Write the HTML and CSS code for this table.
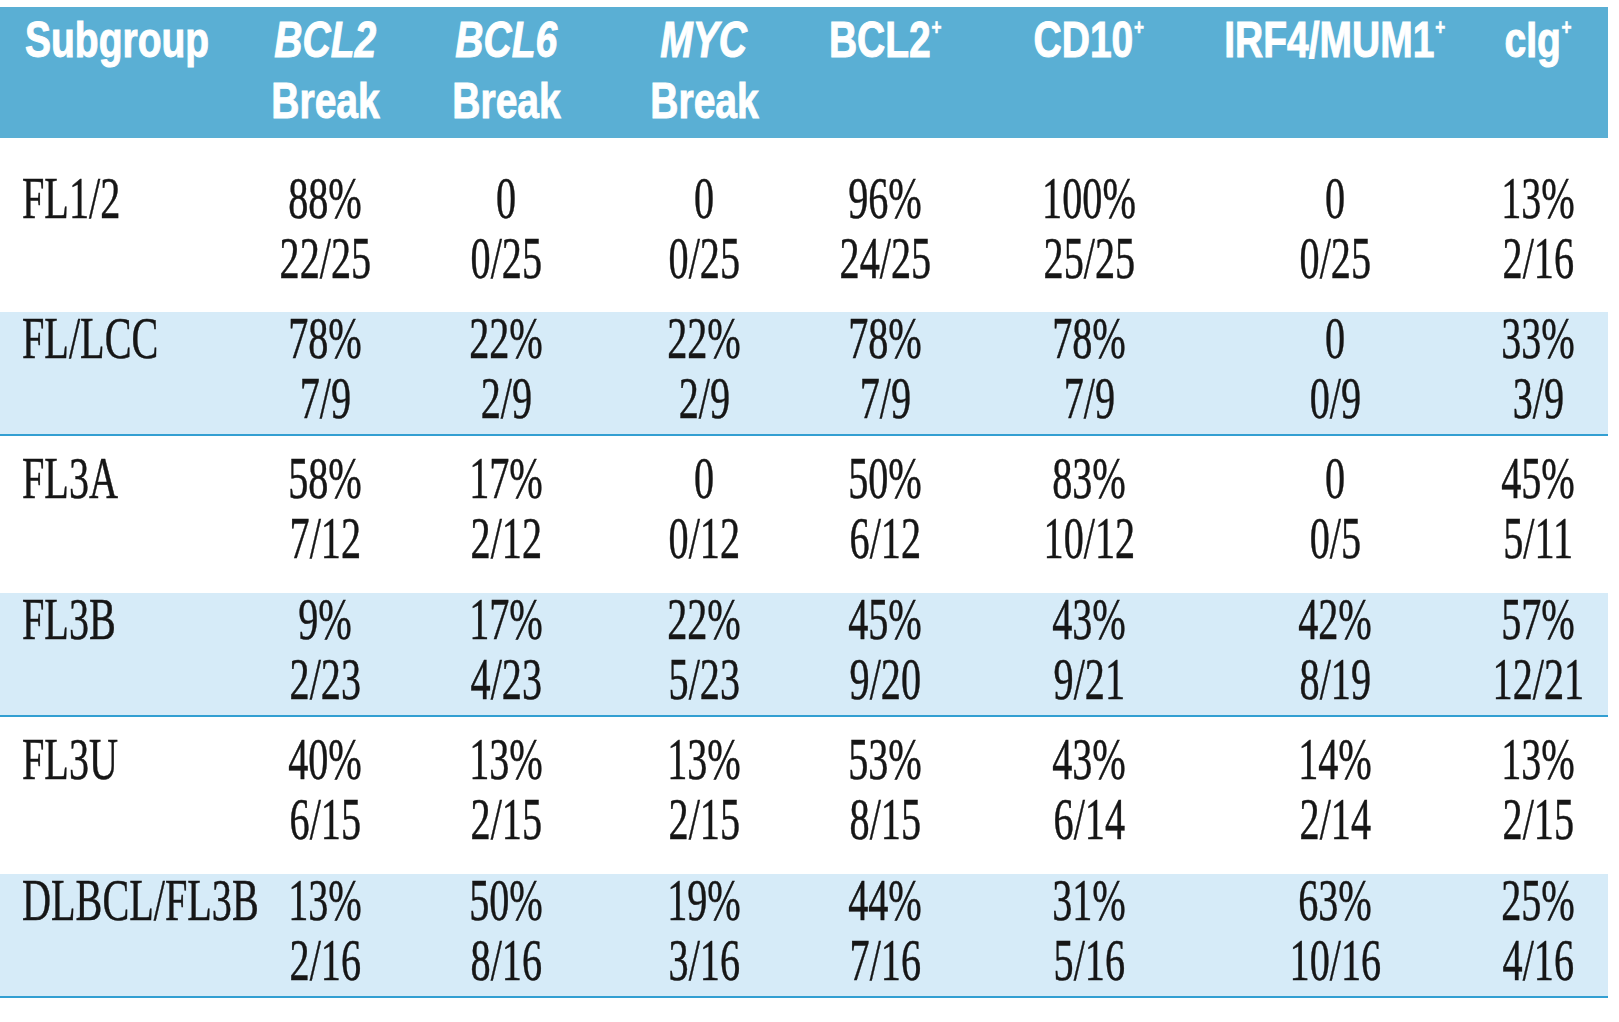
FILE: index.html
```html
<!DOCTYPE html>
<html lang="en">
<head>
<meta charset="utf-8">
<title>Subgroup table</title>
<link rel="stylesheet" href="styles.css">
</head>
<body>
<div class="table">
  <div class="row head">
    <div class="cell first"><span class="t">Subgroup</span></div>
    <div class="cell"><span class="t"><i>BCL2</i></span><span class="t">Break</span></div>
    <div class="cell"><span class="t"><i>BCL6</i></span><span class="t">Break</span></div>
    <div class="cell"><span class="t"><i>MYC</i></span><span class="t">Break</span></div>
    <div class="cell"><span class="t">BCL2<sup class="plus">+</sup></span></div>
    <div class="cell"><span class="t">CD10<sup class="plus">+</sup></span></div>
    <div class="cell"><span class="t">IRF4/MUM1<sup class="plus">+</sup></span></div>
    <div class="cell last"><span class="t">cIg<sup class="plus">+</sup></span></div>
  </div>

  <div class="row plain top">
    <div class="cell first"><span class="t">FL1/2</span></div>
    <div class="cell"><span class="t">88%</span><span class="t">22/25</span></div>
    <div class="cell"><span class="t">0</span><span class="t">0/25</span></div>
    <div class="cell"><span class="t">0</span><span class="t">0/25</span></div>
    <div class="cell"><span class="t">96%</span><span class="t">24/25</span></div>
    <div class="cell"><span class="t">100%</span><span class="t">25/25</span></div>
    <div class="cell"><span class="t">0</span><span class="t">0/25</span></div>
    <div class="cell last"><span class="t">13%</span><span class="t">2/16</span></div>
  </div>

  <div class="row shade">
    <div class="cell first"><span class="t">FL/LCC</span></div>
    <div class="cell"><span class="t">78%</span><span class="t">7/9</span></div>
    <div class="cell"><span class="t">22%</span><span class="t">2/9</span></div>
    <div class="cell"><span class="t">22%</span><span class="t">2/9</span></div>
    <div class="cell"><span class="t">78%</span><span class="t">7/9</span></div>
    <div class="cell"><span class="t">78%</span><span class="t">7/9</span></div>
    <div class="cell"><span class="t">0</span><span class="t">0/9</span></div>
    <div class="cell last"><span class="t">33%</span><span class="t">3/9</span></div>
  </div>

  <div class="row plain">
    <div class="cell first"><span class="t">FL3A</span></div>
    <div class="cell"><span class="t">58%</span><span class="t">7/12</span></div>
    <div class="cell"><span class="t">17%</span><span class="t">2/12</span></div>
    <div class="cell"><span class="t">0</span><span class="t">0/12</span></div>
    <div class="cell"><span class="t">50%</span><span class="t">6/12</span></div>
    <div class="cell"><span class="t">83%</span><span class="t">10/12</span></div>
    <div class="cell"><span class="t">0</span><span class="t">0/5</span></div>
    <div class="cell last"><span class="t">45%</span><span class="t">5/11</span></div>
  </div>

  <div class="row shade">
    <div class="cell first"><span class="t">FL3B</span></div>
    <div class="cell"><span class="t">9%</span><span class="t">2/23</span></div>
    <div class="cell"><span class="t">17%</span><span class="t">4/23</span></div>
    <div class="cell"><span class="t">22%</span><span class="t">5/23</span></div>
    <div class="cell"><span class="t">45%</span><span class="t">9/20</span></div>
    <div class="cell"><span class="t">43%</span><span class="t">9/21</span></div>
    <div class="cell"><span class="t">42%</span><span class="t">8/19</span></div>
    <div class="cell last"><span class="t">57%</span><span class="t">12/21</span></div>
  </div>

  <div class="row plain">
    <div class="cell first"><span class="t">FL3U</span></div>
    <div class="cell"><span class="t">40%</span><span class="t">6/15</span></div>
    <div class="cell"><span class="t">13%</span><span class="t">2/15</span></div>
    <div class="cell"><span class="t">13%</span><span class="t">2/15</span></div>
    <div class="cell"><span class="t">53%</span><span class="t">8/15</span></div>
    <div class="cell"><span class="t">43%</span><span class="t">6/14</span></div>
    <div class="cell"><span class="t">14%</span><span class="t">2/14</span></div>
    <div class="cell last"><span class="t">13%</span><span class="t">2/15</span></div>
  </div>

  <div class="row shade">
    <div class="cell first"><span class="t">DLBCL/FL3B</span></div>
    <div class="cell"><span class="t">13%</span><span class="t">2/16</span></div>
    <div class="cell"><span class="t">50%</span><span class="t">8/16</span></div>
    <div class="cell"><span class="t">19%</span><span class="t">3/16</span></div>
    <div class="cell"><span class="t">44%</span><span class="t">7/16</span></div>
    <div class="cell"><span class="t">31%</span><span class="t">5/16</span></div>
    <div class="cell"><span class="t">63%</span><span class="t">10/16</span></div>
    <div class="cell last"><span class="t">25%</span><span class="t">4/16</span></div>
  </div>
</div>
</body>
</html>
```

FILE: styles.css
```css
* {
  box-sizing: border-box;
}

html, body {
  margin: 0;
  padding: 0;
  background: #ffffff;
}

body {
  padding-top: 7px;
}

.table {
  width: 1608px;
}

.row {
  display: grid;
  grid-template-columns: 234px 182px 180px 216px 146px 262px 230px 158px;
}

.cell {
  display: flex;
  flex-direction: column;
  align-items: center;
  white-space: nowrap;
}

.cell.first {
  align-items: flex-start;
}

.cell.last {
  padding-left: 18px;
}

.t {
  display: block;
}

/* header */
.head {
  background: #5aafd4;
  color: #ffffff;
  font-family: "Liberation Sans", Arial, sans-serif;
  font-weight: bold;
  font-size: 50px;
  line-height: 36px;
  padding: 15px 0 19px;
  -webkit-text-stroke: 1px #ffffff;
}

.head .cell {
  gap: 25px;
}

.head .cell.first {
  padding-left: 25px;
}

.head .t {
  transform: scaleX(0.78);
  transform-origin: center top;
}

.head .cell.first .t {
  transform-origin: left top;
}

.head i {
  font-style: italic;
}

.plus {
  font-size: 22px;
  line-height: 12px;
  vertical-align: top;
  margin-left: 1px;
  -webkit-text-stroke: 0.6px #ffffff;
}

/* body rows */
.plain,
.shade {
  color: #161616;
  font-family: "Liberation Serif", "Times New Roman", serif;
  font-size: 60px;
  line-height: 40px;
  -webkit-text-stroke: 0.5px #161616;
}

.plain .cell,
.shade .cell {
  gap: 20px;
}

.plain .cell.first,
.shade .cell.first {
  padding-left: 22px;
}

.plain .t,
.shade .t {
  transform: scaleX(0.67);
  transform-origin: center top;
}

.plain .cell.first .t,
.shade .cell.first .t {
  transform-origin: left top;
}

.plain {
  padding: 22px 0 35px;
}

.plain.top {
  padding: 40px 0 34px;
}

.shade {
  background: #d6ebf8;
  padding: 6px 0 16px;
  border-bottom: 2px solid #339fd2;
}
```
